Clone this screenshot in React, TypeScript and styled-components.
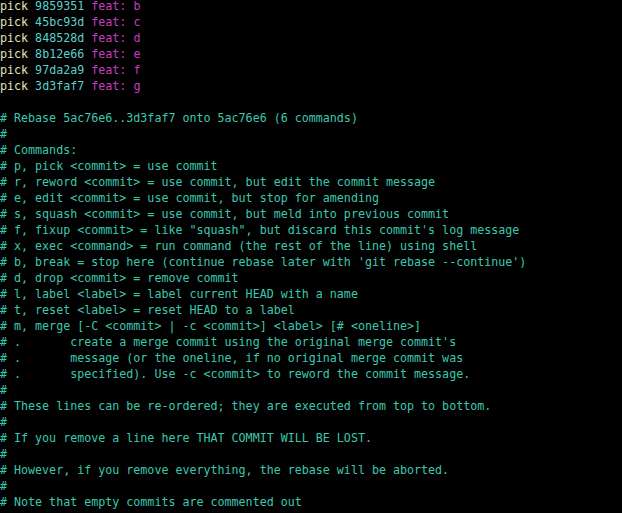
import React from "react";
import styled, { createGlobalStyle } from "styled-components";

const Global = createGlobalStyle`
  html, body {
    margin: 0;
    padding: 0;
    background: #000000;
    height: 100%;
    overflow: hidden;
  }
  #root { height: 100%; }
`;

const Terminal = styled.pre`
  margin: 0;
  margin-top: -2px;
  padding: 0 0 0 0;
  background: #000000;
  min-height: 100%;
  font-family: "DejaVu Sans Mono", "Liberation Mono", monospace;
  font-size: 11.67px;
  line-height: 16px;
  color: #3cc8b0;
  white-space: pre;
`;

const Line = styled.div`
  height: 16px;
`;

type Tone = "pick" | "hash" | "subject" | "comment";

const palette: Record<Tone, string> = {
  pick: "#e6e6b4",
  hash: "#5ccfcf",
  subject: "#c33ec3",
  comment: "#3cc8b0",
};

const Token = styled.span<{ $tone: Tone }>`
  color: ${(p) => palette[p.$tone]};
`;

const commits = [
  ["9859351", "b"],
  ["45bc93d", "c"],
  ["848528d", "d"],
  ["8b12e66", "e"],
  ["97da2a9", "f"],
  ["3d3faf7", "g"],
];

const comments = [
  "# Rebase 5ac76e6..3d3faf7 onto 5ac76e6 (6 commands)",
  "#",
  "# Commands:",
  "# p, pick <commit> = use commit",
  "# r, reword <commit> = use commit, but edit the commit message",
  "# e, edit <commit> = use commit, but stop for amending",
  "# s, squash <commit> = use commit, but meld into previous commit",
  "# f, fixup <commit> = like \"squash\", but discard this commit's log message",
  "# x, exec <command> = run command (the rest of the line) using shell",
  "# b, break = stop here (continue rebase later with 'git rebase --continue')",
  "# d, drop <commit> = remove commit",
  "# l, label <label> = label current HEAD with a name",
  "# t, reset <label> = reset HEAD to a label",
  "# m, merge [-C <commit> | -c <commit>] <label> [# <oneline>]",
  "# .       create a merge commit using the original merge commit's",
  "# .       message (or the oneline, if no original merge commit was",
  "# .       specified). Use -c <commit> to reword the commit message.",
  "#",
  "# These lines can be re-ordered; they are executed from top to bottom.",
  "#",
  "# If you remove a line here THAT COMMIT WILL BE LOST.",
  "#",
  "# However, if you remove everything, the rebase will be aborted.",
  "#",
  "# Note that empty commits are commented out",
];

export default function App() {
  return (
    <>
      <Global />
      <Terminal>
        {commits.map(([hash, letter]) => (
          <Line key={hash}>
            <Token $tone="pick">pick</Token> <Token $tone="hash">{hash}</Token>{" "}
            <Token $tone="subject">feat: {letter}</Token>
          </Line>
        ))}
        <Line />
        {comments.map((text, i) => (
          <Line key={i}>
            <Token $tone="comment">{text}</Token>
          </Line>
        ))}
      </Terminal>
    </>
  );
}
